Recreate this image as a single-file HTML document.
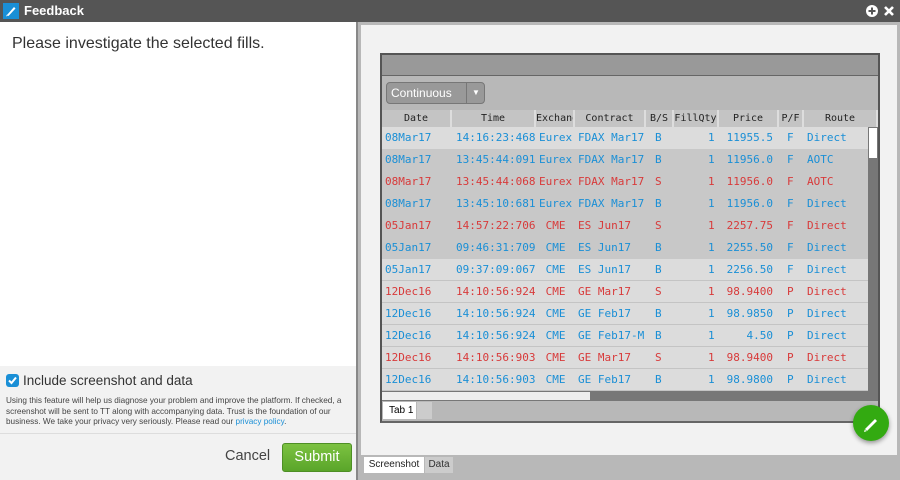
<!DOCTYPE html><html><head><style>
*{margin:0;padding:0;box-sizing:border-box}
body{width:900px;height:480px;overflow:hidden;background:#555;font-family:"Liberation Sans",sans-serif;position:relative}
.abs{position:absolute}
.mono{font-family:"DejaVu Sans Mono","Liberation Mono",monospace;font-size:11px}
.row{position:absolute;left:0;width:486px;height:22px;line-height:22px}
.row span{position:absolute;white-space:nowrap;overflow:hidden}
.b{color:#1a8fd6}.r{color:#d83a3a}
.hd span{position:absolute;top:0;height:17px;line-height:17px;background:#c4c4c4;text-align:center;border-right:2px solid #ddd;color:#222;overflow:hidden;white-space:nowrap}
</style></head><body>
<div class="abs" style="left:0;top:0;width:900px;height:22px;background:#555"></div>
<div class="abs" style="left:3px;top:3px;width:16px;height:16px;background:#1a8fd6"><svg width="16" height="16"><path d="M4 12 L11 4 L12.5 5.5 L5.5 13 Z" fill="#fff"/><path d="M3 13.5 L4 11.5 L5 12.5Z" fill="#fff"/></svg></div>
<div class="abs" style="left:24px;top:3px;color:#fff;font-size:13px;font-weight:bold">Feedback</div>
<svg class="abs" style="left:865px;top:4px" width="32" height="14"><circle cx="7" cy="7" r="6" fill="#fff"/><path d="M7 3.5V10.5M3.5 7H10.5" stroke="#555" stroke-width="2"/><path d="M20 3 L28 11 M28 3 L20 11" stroke="#fff" stroke-width="2.6"/></svg>
<div class="abs" style="left:0;top:22px;width:358px;height:344px;background:#fff"></div>
<div class="abs" style="left:12px;top:35px;font-size:16px;color:#333">Please investigate the selected fills.</div>
<div class="abs" style="left:0;top:366px;width:358px;height:114px;background:#f2f2f2"></div>
<div class="abs" style="left:6px;top:374px;width:13px;height:13px;background:#1a8fd6;border-radius:3px"><svg width="13" height="13"><path d="M3 6.5L5.5 9L10 3.5" stroke="#fff" stroke-width="2" fill="none"/></svg></div>
<div class="abs" style="left:23px;top:373px;font-size:13.5px;color:#333">Include screenshot and data</div>
<div class="abs" style="left:6px;top:396px;width:345px;font-size:8.2px;line-height:10.6px;color:#444">Using this feature will help us diagnose your problem and improve the platform. If checked, a screenshot will be sent to TT along with accompanying data. Trust is the foundation of our business. We take your privacy very seriously. Please read our <span style="color:#1a8fd6">privacy policy</span>.</div>
<div class="abs" style="left:0;top:433px;width:358px;height:1px;background:#ddd"></div>
<div class="abs" style="left:225px;top:448px;font-size:14.5px;color:#444">Cancel</div>
<div class="abs" style="left:282px;top:443px;width:70px;height:29px;background:linear-gradient(#7cc241,#5aa52a);border:1px solid #4e8f25;border-radius:3px;color:#fff;font-size:14.5px;text-align:center;line-height:27px">Submit</div>
<div class="abs" style="left:356px;top:22px;width:2px;height:458px;background:#888"></div>
<div class="abs" style="left:358px;top:22px;width:542px;height:458px;background:#b8b8b8"></div>
<div class="abs" style="left:361px;top:25px;width:536px;height:430px;background:#f2f2f2"></div>
<div class="abs" style="left:364px;top:457px;width:60px;height:16px;background:#fff;font-size:10px;color:#222;text-align:center;line-height:16px">Screenshot</div>
<div class="abs" style="left:425px;top:457px;width:28px;height:16px;background:#ccc;font-size:10px;color:#333;text-align:center;line-height:16px">Data</div>
<div class="abs" style="left:380px;top:53px;width:500px;height:370px;background:#b8b8b8;border:2px solid #555;border-top-color:#555;border-bottom-color:#666">
 <div class="abs" style="left:0;top:0;width:496px;height:21px;background:#999;border-bottom:1px solid #666"></div>
 <div class="abs" style="left:4px;top:27px;width:99px;height:22px;background:#999;border:1px solid #777;border-radius:4px;color:#fff;font-size:12px;line-height:20px;padding-left:4px">Continuous<span style="position:absolute;left:79px;top:0;width:1px;height:20px;background:#777"></span><span style="position:absolute;left:85px;top:0;font-size:8px">▼</span></div>
 <div class="abs hd mono" style="left:0;top:55px;width:496px;height:17px;font-size:10px">
  <span style="left:0;width:70px">Date</span><span style="left:70px;width:84px">Time</span><span style="left:154px;width:39px;text-align:left">Exchange</span><span style="left:193px;width:71px">Contract</span><span style="left:264px;width:28px">B/S</span><span style="left:292px;width:45px">FillQty</span><span style="left:337px;width:60px">Price</span><span style="left:397px;width:25px">P/F</span><span style="left:422px;width:74px">Route</span>
 </div>
 <div class="abs" style="left:0;top:72px;width:486px;height:264px;background:#dcdcdc;overflow:hidden" id="g"></div>
 <div class="abs" style="left:486px;top:72px;width:10px;height:264px;background:#777"><div style="margin:1px;width:8px;height:30px;background:#fff"></div></div>
 <div class="abs" style="left:0;top:336px;width:496px;height:10px;background:#777"><div style="width:208px;height:8px;background:#eee;margin-top:1px"></div></div>
 <div class="abs" style="left:1px;top:347px;width:33px;height:17px;background:#fff;font-size:10px;line-height:17px;padding-left:6px">Tab 1</div>
 <div class="abs" style="left:35px;top:347px;width:15px;height:17px;background:#ccc"></div>
</div>
<div class="abs" style="left:853px;top:405px;width:36px;height:36px;border-radius:50%;background:#33aa11;box-shadow:0 2px 5px rgba(0,0,0,.4)"><svg width="36" height="36"><path d="M12 24 L22 14 L24 16 L14 26 Z" fill="#fff"/><path d="M11 27L11.8 24.5L13.5 26.2Z" fill="#fff"/></svg></div>
<script>
var d=[["b","08Mar17","14:16:23:468","Eurex","FDAX Mar17","B","11955.5","F","Direct"],
["b","08Mar17","13:45:44:091","Eurex","FDAX Mar17","B","11956.0","F","AOTC"],
["r","08Mar17","13:45:44:068","Eurex","FDAX Mar17","S","11956.0","F","AOTC"],
["b","08Mar17","13:45:10:681","Eurex","FDAX Mar17","B","11956.0","F","Direct"],
["r","05Jan17","14:57:22:706"," CME","ES Jun17","S","2257.75","F","Direct"],
["b","05Jan17","09:46:31:709"," CME","ES Jun17","B","2255.50","F","Direct"],
["b","05Jan17","09:37:09:067"," CME","ES Jun17","B","2256.50","F","Direct"],
["r","12Dec16","14:10:56:924"," CME","GE Mar17","S","98.9400","P","Direct"],
["b","12Dec16","14:10:56:924"," CME","GE Feb17","B","98.9850","P","Direct"],
["b","12Dec16","14:10:56:924"," CME","GE Feb17-M","B","4.50","P","Direct"],
["r","12Dec16","14:10:56:903"," CME","GE Mar17","S","98.9400","P","Direct"],
["b","12Dec16","14:10:56:903"," CME","GE Feb17","B","98.9800","P","Direct"]];
var h="";d.forEach(function(r,i){var bg=(i>=1&&i<=5)?"#c8c8c8":"#dcdcdc";var bd=i>=6?"border-bottom:1px solid #c4c4c4;":"";
h+='<div class="row mono '+r[0]+'" style="top:'+(i*22)+'px;background:'+bg+';'+bd+'"><span style="left:3px">'+r[1]+'</span><span style="left:74px;width:80px">'+r[2]+'</span><span style="left:157px">'+r[3].replace(" ","&nbsp;")+'</span><span style="left:196px;width:66px">'+r[4]+'</span><span style="left:273px">'+r[5]+'</span><span style="left:326px">1</span><span style="right:95px">'+r[6]+'</span><span style="left:405px">'+r[7]+'</span><span style="left:425px">'+r[8]+'</span></div>';});
document.getElementById("g").innerHTML=h;
</script>
</body></html>
